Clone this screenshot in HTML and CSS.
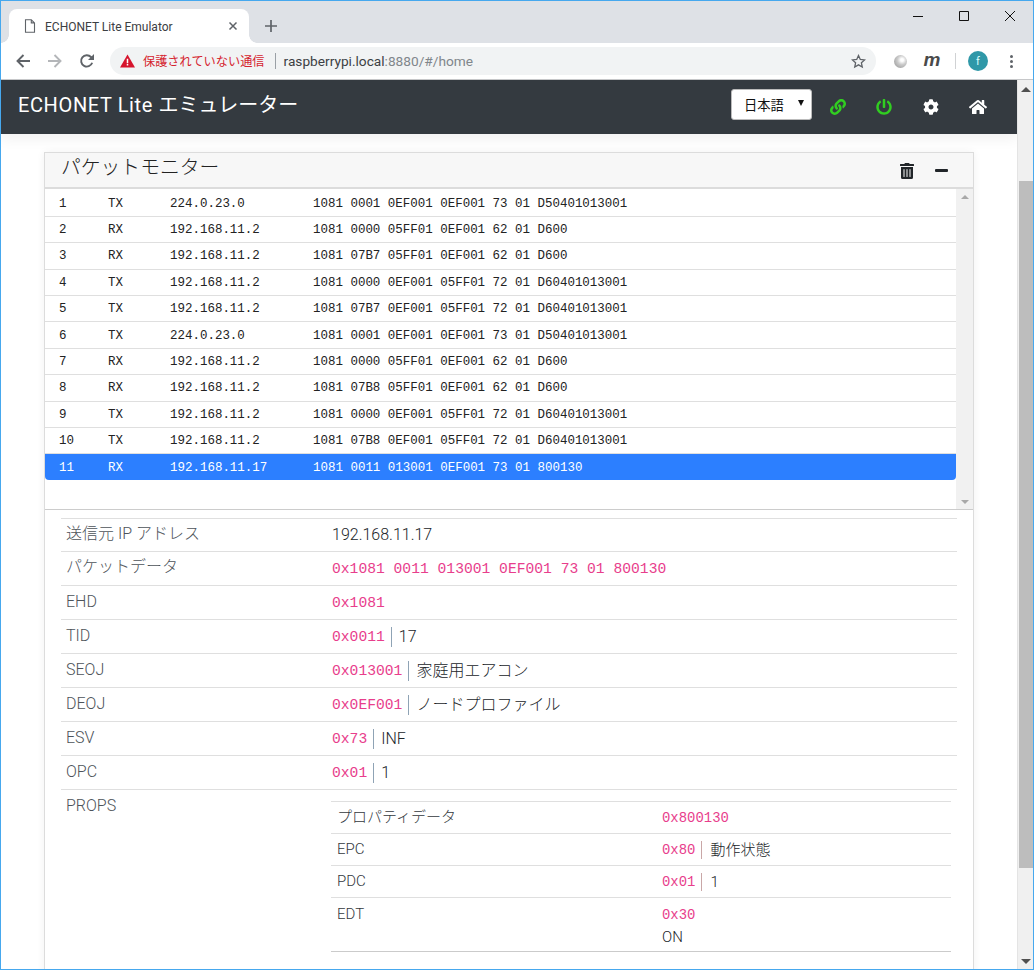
FILE: index.html
```html
<!DOCTYPE html>
<html lang="ja">
<head>
<meta charset="utf-8">
<title>ECHONET Lite Emulator</title>
<link rel="stylesheet" href="styles.css">
</head>
<body>
<div class="window">
  <div class="tabstrip">
    <div class="tab">
      <svg class="tab-doc" viewBox="0 0 12 14" width="12" height="14"><path d="M1.5.7h5.8l3.2 3.2v9.4h-9z M7.3.7v3.2h3.2" fill="none" stroke="#5f6368" stroke-width="1.1"/></svg>
      <span class="tab-title">ECHONET Lite Emulator</span>
      <svg class="tab-close" viewBox="0 0 10 10" width="10" height="10"><path d="M1.5 1.5l7 7M8.5 1.5l-7 7" stroke="#5f6368" stroke-width="1.5"/></svg>
    </div>
    <svg class="tab-new" viewBox="0 0 14 14" width="14" height="14"><path d="M7 1v12M1 7h12" stroke="#5f6368" stroke-width="1.7"/></svg>
    <div class="caption">
      <svg viewBox="0 0 46 12" width="46" height="12"><path d="M18 6.5h10" stroke="#111" stroke-width="1"/></svg>
      <svg viewBox="0 0 46 12" width="46" height="12"><path d="M18.5 1.5h9v9h-9z" fill="none" stroke="#111" stroke-width="1"/></svg>
      <svg viewBox="0 0 46 12" width="46" height="12"><path d="M18 1l10 10M28 1L18 11" stroke="#111" stroke-width="1"/></svg>
    </div>
  </div>
  <div class="toolbar">
    <div class="tool"><svg viewBox="0 0 16 16" width="16" height="16"><path d="M15 8H2.5M8.5 2L2.5 8l6 6" fill="none" stroke="#5f6368" stroke-width="1.9"/></svg></div>
    <div class="tool"><svg viewBox="0 0 16 16" width="16" height="16"><path d="M1 8h12.5M7.5 2l6 6-6 6" fill="none" stroke="#b4b6b9" stroke-width="1.9"/></svg></div>
    <div class="tool"><svg viewBox="0 0 16 16" width="16" height="16"><path d="M13.2 9.8A5.7 5.7 0 1 1 12 4l1.4 1.5" fill="none" stroke="#5f6368" stroke-width="1.9"/><path d="M15 1v6H9z" fill="#5f6368"/></svg></div>
    <div class="omnibox">
      <svg class="warn" viewBox="0 0 16 14" width="15" height="14"><path d="M8 0l8 14H0z" fill="#d6142d"/><path d="M7.2 4.7h1.6v4.6H7.2zM7.2 10.3h1.6v1.6H7.2z" fill="#fff"/></svg>
      <span class="insecure">保護されていない通信</span>
      <span class="omni-sep"></span>
      <span class="url">raspberrypi.local<span class="url-dim">:8880/#/home</span></span>
      <svg class="star" viewBox="0 0 16 16" width="15" height="15"><path d="M8 1.6l1.9 4.2 4.6.5-3.4 3.1.9 4.5L8 11.6l-4 2.3.9-4.5L1.5 6.3l4.6-.5z" fill="none" stroke="#5f6368" stroke-width="1.4"/></svg>
    </div>
    <div class="tool ext"><span class="orb"></span></div>
    <div class="tool"><span class="ext-m">m</span></div>
    <span class="tool-sep"></span>
    <span class="avatar">f</span>
    <div class="dots"><i></i><i></i><i></i></div>
  </div>
  <div class="viewport">
    <div class="page">
      <nav class="navbar">
        <span class="brand"><span class="brand-latin">ECHONET Lite </span>エミュレーター</span>
        <div class="nav-right">
          <div class="select"><span>日本語</span><i class="select-arrow"></i></div>
          <svg class="nav-icon green" viewBox="0 0 512 512"><path d="M326.612 185.391c59.747 59.809 58.927 155.698.36 214.59-.11.12-.24.25-.36.37l-67.2 67.2c-59.27 59.27-155.699 59.262-214.96 0-59.27-59.26-59.27-155.7 0-214.96l37.106-37.106c9.84-9.84 26.786-3.3 27.294 10.606.648 17.722 3.826 35.527 9.69 52.721 1.986 5.822.567 12.262-3.783 16.612l-13.087 13.087c-28.026 28.026-28.905 73.66-1.155 101.96 28.024 28.579 74.086 28.749 102.325.51l67.2-67.19c28.191-28.191 28.073-73.757 0-101.83-3.701-3.694-7.429-6.564-10.341-8.569a16.037 16.037 0 0 1-6.947-12.606c-.396-10.567 3.348-21.456 11.698-29.806l21.054-21.055c5.521-5.521 14.182-6.199 20.584-1.731a152.482 152.482 0 0 1 20.522 17.197zM467.547 44.449c-59.261-59.262-155.69-59.27-214.96 0l-67.2 67.2c-.12.12-.25.25-.36.37-58.566 58.892-59.387 154.781.36 214.59a152.454 152.454 0 0 0 20.521 17.196c6.402 4.468 15.064 3.789 20.584-1.731l21.054-21.055c8.35-8.35 12.094-19.239 11.698-29.806a16.037 16.037 0 0 0-6.947-12.606c-2.912-2.005-6.64-4.875-10.341-8.569-28.073-28.073-28.191-73.639 0-101.83l67.2-67.19c28.239-28.239 74.3-28.069 102.325.51 27.75 28.3 26.872 73.934-1.155 101.96l-13.087 13.087c-4.35 4.35-5.769 10.79-3.783 16.612 5.864 17.194 9.042 34.999 9.69 52.721.509 13.906 17.454 20.446 27.294 10.606l37.106-37.106c59.271-59.259 59.271-155.699.001-214.959z"/></svg>
          <svg class="nav-icon green power" viewBox="0 0 512 512"><path d="M400 54.1c63 45 104 118.6 104 201.9 0 136.8-110.8 247.7-247.5 248C120 504.3 8.2 393 8 256.4 7.9 173.1 48.9 99.3 111.8 54.2c11.7-8.3 28-4.8 35 7.7L162.6 90c5.9 10.5 3.1 23.8-6.6 31-41.5 30.8-68 79.6-68 134.9-.1 92.3 74.5 168.1 168 168.1 91.6 0 168.6-74.2 168-169.1-.3-51.8-24.7-101.8-68.1-134-9.7-7.2-12.4-20.5-6.5-30.9l15.8-28.1c7-12.4 23.2-16.1 34.8-7.8zM296 264V24c0-13.3-10.7-24-24-24h-32c-13.3 0-24 10.7-24 24v240c0 13.3 10.7 24 24 24h32c13.3 0 24-10.7 24-24z"/></svg>
          <svg class="nav-icon white" viewBox="0 0 512 512"><path d="M487.4 315.7l-42.6-24.6c4.3-23.2 4.3-47 0-70.2l42.6-24.6c4.9-2.8 7.1-8.6 5.5-14-11.1-35.6-30-67.8-54.7-94.6-3.8-4.1-10-5.1-14.8-2.3L380.8 110c-17.9-15.4-38.5-27.3-60.8-35.1V25.8c0-5.6-3.9-10.5-9.4-11.7-36.7-8.2-74.3-7.8-109.2 0-5.5 1.2-9.4 6.1-9.4 11.7V75c-22.2 7.9-42.8 19.8-60.8 35.1L88.7 85.5c-4.9-2.8-11-1.9-14.8 2.3-24.7 26.7-43.6 58.9-54.7 94.6-1.7 5.4.6 11.2 5.5 14L67.3 221c-4.3 23.2-4.3 47 0 70.2l-42.6 24.6c-4.9 2.8-7.1 8.6-5.5 14 11.1 35.6 30 67.8 54.7 94.6 3.8 4.1 10 5.1 14.8 2.3l42.6-24.6c17.9 15.4 38.5 27.3 60.8 35.1v49.2c0 5.6 3.9 10.5 9.4 11.7 36.7 8.2 74.3 7.8 109.2 0 5.5-1.2 9.4-6.1 9.4-11.7v-49.2c22.2-7.9 42.8-19.8 60.8-35.1l42.6 24.6c4.9 2.8 11 1.9 14.8-2.3 24.7-26.7 43.6-58.9 54.7-94.6 1.5-5.5-.7-11.3-5.6-14.1zM256 336c-44.1 0-80-35.9-80-80s35.9-80 80-80 80 35.9 80 80-35.9 80-80 80z"/></svg>
          <svg class="nav-icon white home" viewBox="0 0 576 512"><path d="M280.37 148.26L96 300.11V464a16 16 0 0 0 16 16l112.06-.29a16 16 0 0 0 15.92-16V368a16 16 0 0 1 16-16h64a16 16 0 0 1 16 16v95.64a16 16 0 0 0 16 16.05L464 480a16 16 0 0 0 16-16V300L295.67 148.26a12.19 12.19 0 0 0-15.3 0zM571.6 251.47L488 182.56V44.05a12 12 0 0 0-12-12h-56a12 12 0 0 0-12 12v72.61L318.47 43a48 48 0 0 0-61 0L4.34 251.47a12 12 0 0 0-1.6 16.9l25.5 31A12 12 0 0 0 45.15 301l235.22-193.74a12.19 12.19 0 0 1 15.3 0L530.9 301a12 12 0 0 0 16.9-1.6l25.5-31a12 12 0 0 0-1.7-16.93z"/></svg>
        </div>
      </nav>
      <main class="content">
        <section class="panel">
          <header class="panel-head">
            <h2 class="panel-title">パケットモニター</h2>
            <svg class="trash" viewBox="0 0 448 512"><path d="M32 464a48 48 0 0 0 48 48h288a48 48 0 0 0 48-48V128H32zm272-256a16 16 0 0 1 32 0v224a16 16 0 0 1-32 0zm-96 0a16 16 0 0 1 32 0v224a16 16 0 0 1-32 0zm-96 0a16 16 0 0 1 32 0v224a16 16 0 0 1-32 0zM432 32H312l-9.4-18.7A24 24 0 0 0 281.1 0H166.8a23.72 23.72 0 0 0-21.4 13.3L136 32H16A16 16 0 0 0 0 48v32a16 16 0 0 0 16 16h416a16 16 0 0 0 16-16V48a16 16 0 0 0-16-16z"/></svg>
            <span class="minus"></span>
          </header>
          <div class="packets">
            <div class="packet-rows">
              <div class="packet"><span>1</span><span>TX</span><span>224.0.23.0</span><span>1081 0001 0EF001 0EF001 73 01 D50401013001</span></div>
              <div class="packet"><span>2</span><span>RX</span><span>192.168.11.2</span><span>1081 0000 05FF01 0EF001 62 01 D600</span></div>
              <div class="packet"><span>3</span><span>RX</span><span>192.168.11.2</span><span>1081 07B7 05FF01 0EF001 62 01 D600</span></div>
              <div class="packet"><span>4</span><span>TX</span><span>192.168.11.2</span><span>1081 0000 0EF001 05FF01 72 01 D60401013001</span></div>
              <div class="packet"><span>5</span><span>TX</span><span>192.168.11.2</span><span>1081 07B7 0EF001 05FF01 72 01 D60401013001</span></div>
              <div class="packet"><span>6</span><span>TX</span><span>224.0.23.0</span><span>1081 0001 0EF001 0EF001 73 01 D50401013001</span></div>
              <div class="packet"><span>7</span><span>RX</span><span>192.168.11.2</span><span>1081 0000 05FF01 0EF001 62 01 D600</span></div>
              <div class="packet"><span>8</span><span>RX</span><span>192.168.11.2</span><span>1081 07B8 05FF01 0EF001 62 01 D600</span></div>
              <div class="packet"><span>9</span><span>TX</span><span>192.168.11.2</span><span>1081 0000 0EF001 05FF01 72 01 D60401013001</span></div>
              <div class="packet"><span>10</span><span>TX</span><span>192.168.11.2</span><span>1081 07B8 0EF001 05FF01 72 01 D60401013001</span></div>
              <div class="packet selected"><span>11</span><span>RX</span><span>192.168.11.17</span><span>1081 0011 013001 0EF001 73 01 800130</span></div>
            </div>
            <div class="mini-scroll"><i class="arrow-up small"></i><i class="arrow-down small"></i></div>
          </div>
          <div class="details">
            <div class="row first"><div class="label cjk">送信元 IP アドレス</div><div class="value">192.168.11.17</div></div>
            <div class="row"><div class="label cjk">パケットデータ</div><div class="value"><code>0x1081 0011 013001 0EF001 73 01 800130</code></div></div>
            <div class="row"><div class="label">EHD</div><div class="value"><code>0x1081</code></div></div>
            <div class="row"><div class="label">TID</div><div class="value"><code>0x0011</code><i class="bar"></i>17</div></div>
            <div class="row"><div class="label">SEOJ</div><div class="value"><code>0x013001</code><i class="bar"></i>家庭用エアコン</div></div>
            <div class="row"><div class="label">DEOJ</div><div class="value"><code>0x0EF001</code><i class="bar"></i>ノードプロファイル</div></div>
            <div class="row"><div class="label">ESV</div><div class="value"><code>0x73</code><i class="bar"></i>INF</div></div>
            <div class="row"><div class="label">OPC</div><div class="value"><code>0x01</code><i class="bar"></i>1</div></div>
            <div class="row props">
              <div class="label">PROPS</div>
              <div class="subtable">
                <div class="subrow"><div class="sublabel">プロパティデータ</div><div class="subvalue"><code>0x800130</code></div></div>
                <div class="subrow"><div class="sublabel">EPC</div><div class="subvalue"><code>0x80</code><i class="bar"></i>動作状態</div></div>
                <div class="subrow"><div class="sublabel">PDC</div><div class="subvalue"><code>0x01</code><i class="bar"></i>1</div></div>
                <div class="subrow last"><div class="sublabel">EDT</div><div class="subvalue"><code class="block">0x30</code><div class="on">ON</div></div></div>
              </div>
            </div>
          </div>
        </section>
      </main>
    </div>
    <div class="scrollbar">
      <i class="arrow-up"></i>
      <div class="thumb"></div>
      <i class="arrow-down"></i>
    </div>
  </div>
</div>
</body>
</html>
```
FILE: styles.css
```css
* { box-sizing: border-box; }
html, body { margin: 0; height: 100%; overflow: hidden; background: #fff; }
body { font-family: Roboto, "Noto Sans CJK JP", sans-serif; font-weight: 300; color: #212529; font-size: 16px; }
i { font-style: normal; display: block; }
.window { width: 1034px; height: 970px; border: 1px solid #46a8ee; display: flex; flex-direction: column; overflow: hidden; }

.tabstrip { height: 42px; flex: none; background: #dee1e6; display: flex; padding: 8px 0 0 8px; position: relative; }
.tab { width: 240px; height: 34px; background: #fff; border-radius: 8px 8px 0 0; display: flex; align-items: center; padding-left: 15px; position: relative; }
.tab::before, .tab::after { content: ""; position: absolute; bottom: 0; width: 8px; height: 8px; }
.tab::before { left: -8px; background: radial-gradient(circle at 0 0, #dee1e6 7.5px, #fff 8px); }
.tab::after { right: -8px; background: radial-gradient(circle at 100% 0, #dee1e6 7.5px, #fff 8px); }
.tab-title { font: 400 12px/16px Roboto, sans-serif; color: #3c4043; margin: 2px 0 0 9px; width: 183px; white-space: nowrap; }
.tab-close { flex: none; }
.tab-new { margin: 10px 0 0 15px; }
.caption { margin-left: auto; display: flex; align-self: flex-start; margin-top: 1px; }
.caption svg { display: block; }

.toolbar { height: 37px; flex: none; background: #fff; border-bottom: 1px solid #c6c7c9; display: flex; align-items: center; padding-left: 6px; }
.tool { width: 32px; height: 32px; display: flex; align-items: center; justify-content: center; flex: none; }
.omnibox { margin-left: 7px; width: 766px; height: 28px; border-radius: 14px; background: #f1f3f4; display: flex; align-items: center; padding-left: 10px; flex: none; }
.warn { flex: none; }
.insecure { margin-left: 8px; font: 400 12.2px "Noto Sans CJK JP", sans-serif; color: #d5232e; white-space: nowrap; }
.omni-sep { width: 1px; height: 16px; background: #9aa0a6; margin: 0 8px 0 10px; }
.url { font: 400 13.7px Roboto, sans-serif; color: #3c4043; white-space: nowrap; }
.url-dim { color: #80868b; }
.star { margin-left: auto; margin-right: 10px; }
.ext { margin-left: 8px; }
.orb { width: 13px; height: 13px; border-radius: 50%; background: radial-gradient(circle at 62% 38%, #fff 12%, #ccc 40%, #8f8f8f 100%); }
.ext-m { font: italic 700 19px "Liberation Sans", sans-serif; color: #4a4a4a; line-height: 1; margin-top: -4px; }
.tool-sep { width: 1px; height: 16px; background: #d0d2d4; margin-left: 7px; }
.avatar { width: 20px; height: 20px; border-radius: 50%; background: #2f98a8; color: #dff; font: 400 11px Roboto, sans-serif; display: flex; align-items: center; justify-content: center; margin-left: 12px; }
.dots { margin-left: 22px; display: flex; flex-direction: column; gap: 2px; }
.dots i { width: 3px; height: 3px; border-radius: 50%; background: #5f6368; }

.viewport { flex: 1; display: flex; min-height: 0; }
.page { width: 1016px; flex: none; overflow: hidden; }
.navbar { height: 54px; background: #343a40; display: flex; align-items: center; padding-left: 17px; box-shadow: 0 6px 12px rgba(0,0,0,.05); position: relative; }
.brand { color: #fff; font-size: 20px; line-height: 28px; font-weight: 400; margin-top: -4px; white-space: nowrap; }
.brand-latin { letter-spacing: .62px; }
.nav-right { margin-left: auto; display: flex; align-items: center; }
.select { width: 81px; height: 31px; background: #fff; border: 1px solid #bbb; border-radius: 3px; display: flex; align-items: center; padding-left: 12px; font: 400 13.3px "Noto Sans CJK JP", sans-serif; color: #111; margin-top: -5px; margin-right: 18px; }
.select-arrow { width: 0; height: 0; border: 3.5px solid transparent; border-top: 6px solid #111; border-bottom: 0; margin-left: 14px; margin-top: -4px; }
.nav-icon { width: 16px; height: 16px; margin-right: 30px; display: block; }
.nav-icon.power { margin-right: 31px; }
.nav-icon.home { width: 18px; margin-right: 30px; }
.green { fill: #31cd21; }
.white { fill: #fff; }

.content { padding: 18px 43px 0 43px; }
.panel { border: 1px solid #dcdcdc; border-bottom: 0; box-shadow: 0 0 8px rgba(0,0,0,.06); height: 900px; background: #fff; }
.panel-head { height: 36px; background: #f7f7f7; border-bottom: 2px solid #dcdcdc; display: flex; align-items: center; padding: 0 25px 0 16px; }
.panel-title { margin: -9px auto 0 0; font-size: 19.8px; line-height: 1.3; font-weight: 300; color: #222; font-family: "Noto Sans CJK JP", sans-serif; }
.trash { width: 14px; height: 16px; fill: #212529; margin-top: 1px; }
.minus { width: 13px; height: 3px; border-radius: 1px; background: #212529; margin: 1px 0 0 21px; }

.packets { height: 321px; display: flex; border-bottom: 1px solid #ccc; }
.packet-rows { flex: 1; padding-top: 1.4px; min-width: 0; }
.packet { height: 26.4px; border-bottom: 1px solid #dfdfdf; display: grid; grid-template-columns: 49px 62px 143px 1fr; padding: 1px 0 0 14px; align-items: center; font: 400 12.47px "Liberation Mono", monospace; color: #222; white-space: pre; }
.packet.selected { height: 26px; background: #2c7fff; color: #fff; border-bottom: 0; border-radius: 0 0 4px 4px; }
.mini-scroll { width: 17px; flex: none; background: #f1f1f1; display: flex; flex-direction: column; justify-content: space-between; align-items: center; padding: 6px 0 5px; }

.arrow-up, .arrow-down { width: 0; height: 0; border-left: 5px solid transparent; border-right: 5px solid transparent; }
.arrow-up { border-bottom: 5px solid #505050; }
.arrow-down { border-top: 5px solid #505050; }
.arrow-up.small { border-bottom-color: #a8a8a8; border-left-width: 4px; border-right-width: 4px; border-bottom-width: 4px; }
.arrow-down.small { border-top-color: #a8a8a8; border-left-width: 4px; border-right-width: 4px; border-top-width: 4px; }

.details { padding: 8px 16px 0; }
.row { min-height: 34px; border-top: 1px solid #dfdfdf; display: grid; grid-template-columns: 270px 1fr; align-items: center; line-height: 24px; }
.row.first { min-height: 33px; }
.label { padding-left: 5px; color: #4d5359; margin-top: -2px; }
.label.cjk { margin-top: -3px; }
.value { padding-left: 1px; display: flex; align-items: center; color: #212529; }
code { font: 400 14.67px/24px "Liberation Mono", monospace; color: #e83e8c; white-space: pre; }
.bar { width: 1px; height: 20px; background: #8fa3b5; margin: 0 7px 0 6px; }
.props { align-items: start; }
.props .label { padding-top: 4px; margin-top: 0; }
.subtable { margin: 11px 6px 0 0; border-top: 1px solid #dfdfdf; }
.subrow { height: 32px; border-bottom: 1px solid #dfdfdf; display: grid; grid-template-columns: 331px 1fr; align-items: center; font-size: 15px; line-height: 22px; }
.subrow.last { height: 54px; border-bottom-color: #cbcbcb; align-items: start; }
.sublabel { padding-left: 6px; color: #33383d; margin-top: -2px; }
.subvalue { display: flex; align-items: center; color: #212529; }
.subvalue code { font-size: 13.93px; line-height: 22px; margin-top: 1px; }
.subvalue .bar { height: 18px; margin: 0 8px 0 6px; background: #c9a7a7; }
.last .sublabel { padding-top: 7px; }
.last .subvalue { display: block; padding-top: 5px; }
.block { display: block; }

.scrollbar { flex: 1; background: #f0f0f0; border-left: 1px solid #e4e4e4; display: flex; flex-direction: column; align-items: center; padding: 7px 0 5px; position: relative; }
.thumb { width: 14px; height: 687px; background: #bdbdbd; margin: 89px 0 auto; }
```
